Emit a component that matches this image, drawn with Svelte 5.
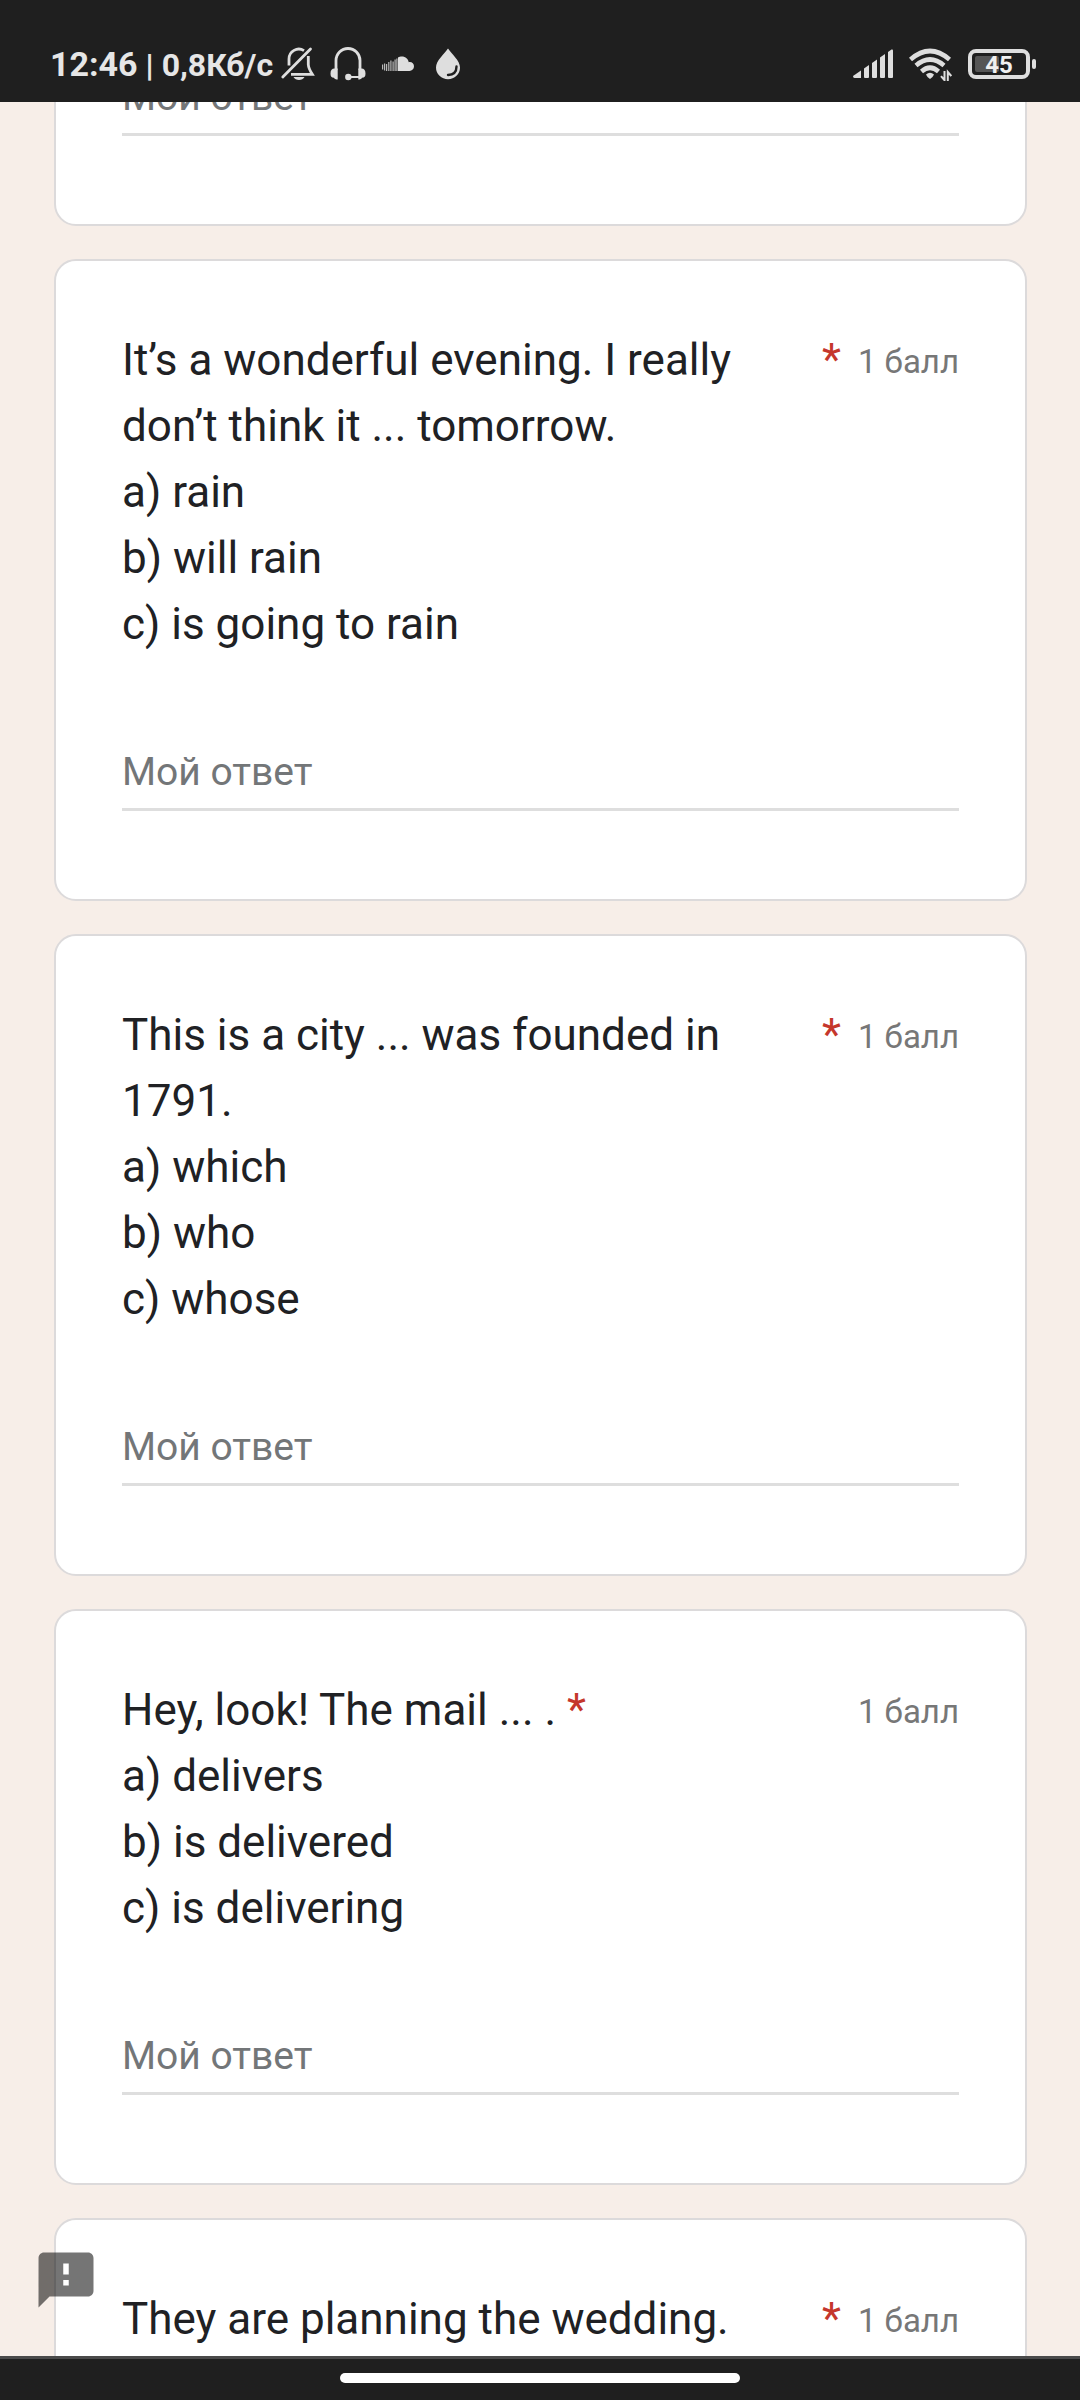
<script lang="ts">
	type Question = {
		id: number;
		text: string;
		inlineMark?: boolean;
	};

	const questions: Question[] = [
		{
			id: 2,
			text: 'It’s a wonderful evening. I really don’t think it ... tomorrow.\na) rain\nb) will rain\nc) is going to rain'
		},
		{
			id: 3,
			text: 'This is a city ... was founded in 1791.\na) which\nb) who\nc) whose'
		},
		{
			id: 4,
			text: 'Hey, look! The mail ... .\na) delivers\nb) is delivered\nc) is delivering',
			inlineMark: true
		},
		{
			id: 5,
			text: 'They are planning the wedding.'
		}
	];

	let answers: Record<number, string> = $state({ 1: '', 2: '', 3: '', 4: '', 5: '' });

	function splitFirstLine(text: string) {
		const i = text.indexOf('\n');
		return [text.slice(0, i), text.slice(i)];
	}
</script>

{#snippet answer(id: number)}
	<input
		class="answer"
		type="text"
		placeholder="Мой ответ"
		aria-label="Мой ответ"
		bind:value={answers[id]}
	/>
{/snippet}

<div class="screen">
	<header class="status-bar">
		<div class="status-text">
			<span>12:46</span>
			<span class="speed">| 0,8Кб/с</span>
		</div>
		<div class="status-icons">
			<!-- muted bell -->
			<svg width="34" height="34" viewBox="0 0 34 34" fill="none" stroke="currentColor" stroke-width="2.8">
				<path d="M8 18.5V12A9.8 9.8 0 0 1 23 3.6" />
				<path d="M27.3 9V17.5C27.5 21 29.5 24.5 31.3 27.3H10" />
				<path d="M1.8 30L29.5 2" stroke-linecap="round" />
				<path d="M12.5 30H23.5C21.5 34 14.5 34 12.5 30Z" fill="currentColor" stroke="none" />
			</svg>
			<!-- headset -->
			<svg width="34" height="34" viewBox="0 0 34 34" fill="none" stroke="currentColor" stroke-width="2.8">
				<path d="M5 23V13.5A12 12 0 0 1 29 13.5V23" />
				<path d="M3.5 21.5H6.7V32.5C3.5 32.5 3.3 31.5 3 30.8C.5 30.5-.5 29.5-.5 26.5C-.5 23 1 21.5 3.5 21.5Z" fill="currentColor" stroke="none" />
				<path d="M30.5 21.5H27.3V32.5C30.5 32.5 30.7 31.5 31 30.8C33.5 30.5 34.5 29.5 34.5 26.5C34.5 23 33 21.5 30.5 21.5Z" fill="currentColor" stroke="none" />
				<circle cx="17.3" cy="30" r="3.2" fill="currentColor" stroke="none" />
				<path d="M18 30H29" stroke-width="2" />
			</svg>
			<!-- sound cloud -->
			<svg width="34" height="34" viewBox="0 0 34 34" fill="currentColor">
				<path d="M17 10.5C18.2 9.7 19.5 9.5 20.7 9.5C24.7 9.5 27.2 12 27.7 15.2C30.7 14.5 33 16.7 33 19.3C33 22 31 24 28.5 24H17Z" />
				<g opacity=".8">
					<rect x="1" y="17.5" width="1.2" height="5" />
					<rect x="3" y="16.5" width="1.2" height="7" />
					<rect x="5" y="17" width="1.2" height="7" />
					<rect x="7.2" y="15" width="1.2" height="9" />
					<rect x="9.3" y="13.5" width="1.2" height="10.5" />
					<rect x="11.5" y="14.5" width="1.2" height="9.5" />
					<rect x="13.5" y="12.5" width="1.2" height="11.5" />
					<rect x="15.3" y="11.5" width="1.2" height="12.5" />
				</g>
			</svg>
			<!-- drop -->
			<svg width="34" height="34" viewBox="0 0 34 34">
				<path d="M17 1.5C20.5 7 29 13.5 29 20.5A12 11.8 0 0 1 5 20.5C5 13.5 13.5 7 17 1.5Z" fill="currentColor" />
				<path d="M25.5 19.5C25.5 24.5 22.5 27.8 17 28" fill="none" stroke="#1f1f1f" stroke-width="2.4" stroke-linecap="round" />
			</svg>
		</div>
		<div class="status-right">
			<!-- mobile signal -->
			<svg width="40" height="30" viewBox="0 0 40 30" fill="currentColor">
				<path d="M0 27L8 21.5V29H1.5Q0 29 0 27Z" />
				<path d="M11 19.5L16 16V28Q16 29 15 29H12Q11 29 11 28Z" />
				<path d="M19 14L24 10.5V28Q24 29 23 29H20Q19 29 19 28Z" />
				<path d="M27 8.5L32 5V28Q32 29 31 29H28Q27 29 27 28Z" />
				<path d="M35 3L38.5 .5Q40 0 40 1.5V28Q40 29 39 29H36Q35 29 35 28Z" />
			</svg>
			<!-- wi-fi -->
			<svg width="43" height="34" viewBox="0 0 43 34" fill="none" stroke="currentColor" stroke-width="4.6">
				<path d="M1.5 12.5Q21 -4.5 40.5 12.5" />
				<path d="M7 18.5Q21 6.5 35 18.5" />
				<path d="M12.5 24.5Q21 17 29.5 24.5" />
				<path d="M17 27.5Q21 24 25 27.5Q24.5 29.5 21 32Q17.5 29.5 17 27.5Z" fill="currentColor" stroke="none" />
				<path d="M35.5 24V33.2L32 29.2" stroke-width="2" />
				<path d="M38.8 34V25L42.3 29" stroke-width="2" />
			</svg>
			<!-- battery -->
			<svg width="68" height="30" viewBox="0 0 68 30">
				<rect x="2" y="2" width="58" height="26" rx="6" fill="none" stroke="currentColor" stroke-width="4" />
				<rect x="7" y="7" width="24" height="16" rx="2" fill="#555" />
				<rect x="64" y="10" width="4" height="10" rx="2" fill="currentColor" />
				<text class="battery-level" x="31" y="24" text-anchor="middle">45</text>
			</svg>
		</div>
	</header>

	<main>
		<form class="form">
			<section class="card">
				{@render answer(1)}
			</section>
			{#each questions as question (question.id)}
				<section class="card">
					<div class="heading">
						{#if question.inlineMark}
							{@const [first, rest] = splitFirstLine(question.text)}
							<div class="title">{first} <span class="mark">*</span>{rest}</div>
						{:else}
							<div class="title">{question.text}</div>
							<span class="mark">*</span>
						{/if}
						<span class="points">1 балл</span>
					</div>
					{@render answer(question.id)}
				</section>
			{/each}
		</form>
		<button class="feedback" aria-label="Сообщить о проблеме">
			<svg width="66" height="66" viewBox="0 0 24 24">
				<path d="M20 2H4c-1.1 0-1.99.9-1.99 2L2 22l4-4h14c1.1 0 2-.9 2-2V4c0-1.1-.9-2-2-2zm-7 12h-2v-2h2v2zm0-4h-2V6h2v4z" />
			</svg>
		</button>
	</main>

	<footer class="nav-bar">
		<span class="home-pill"></span>
	</footer>
</div>

<style>
	:global(body) {
		margin: 0;
		background: #f7eee8;
	}

	.screen {
		display: flex;
		flex-direction: column;
		height: 100vh;
		font-family: Roboto, 'Noto Sans', sans-serif;
		color: #202124;
	}

	.status-bar {
		flex: none;
		display: flex;
		align-items: center;
		box-sizing: border-box;
		height: 102px;
		padding: 26px 44px 0 50px;
		background: #1f1f1f;
		color: #dedede;
	}

	.status-text {
		display: flex;
		align-items: baseline;
		gap: 8px;
		font-size: 34px;
		font-weight: 700;
		color: #e6e6e6;
	}

	.speed {
		font-size: 32px;
	}

	.status-icons {
		display: flex;
		align-items: center;
		gap: 16px;
		margin-left: 8px;
	}

	.status-icons svg {
		overflow: visible;
	}

	.status-right {
		display: flex;
		align-items: center;
		gap: 16px;
		margin-left: auto;
	}

	.battery-level {
		font-size: 24px;
		font-weight: 700;
		fill: #f0f0f0;
	}

	main {
		position: relative;
		flex: 1;
		min-height: 0;
		overflow: hidden;
	}

	/* the list is scrolled part way through its first card */
	.form {
		display: flex;
		flex-direction: column;
		gap: 33px;
		margin-top: -106px;
		padding: 0 53px 0 54px;
	}

	.card {
		padding: 66px 66px 88px;
		border: 2px solid #dcdadb;
		border-radius: 22px;
		background: #fff;
	}

	.heading {
		display: flex;
		align-items: flex-start;
		margin-bottom: 82px;
	}

	.title {
		flex: 1;
		font-size: 44px;
		line-height: 66px;
		white-space: pre-line;
	}

	.mark {
		font-size: 44px;
		line-height: 66px;
		color: #c5372c;
	}

	.points {
		margin: 2px 0 0 17px;
		font-size: 33px;
		line-height: 66px;
		color: #777;
	}

	.answer {
		display: block;
		box-sizing: border-box;
		width: 100%;
		height: 72px;
		padding: 0 0 3px;
		border: none;
		border-bottom: 3px solid #dedede;
		outline: none;
		background: transparent;
		font-family: inherit;
		font-size: 39px;
		line-height: 66px;
		color: #202124;
	}

	.answer::placeholder {
		color: #737678;
		opacity: 1;
	}

	.feedback {
		position: absolute;
		left: 33px;
		bottom: 43px;
		padding: 0;
		border: none;
		background: none;
		cursor: pointer;
	}

	.feedback svg {
		display: block;
		fill: rgba(0, 0, 0, 0.54);
	}

	.nav-bar {
		flex: none;
		display: flex;
		align-items: center;
		justify-content: center;
		box-sizing: border-box;
		height: 44px;
		padding-bottom: 3px;
		border-top: 3px solid #4a4a4a;
		background: #1f1f1f;
	}

	.home-pill {
		width: 37%;
		height: 10px;
		border-radius: 5px;
		background: #fff;
	}
</style>
